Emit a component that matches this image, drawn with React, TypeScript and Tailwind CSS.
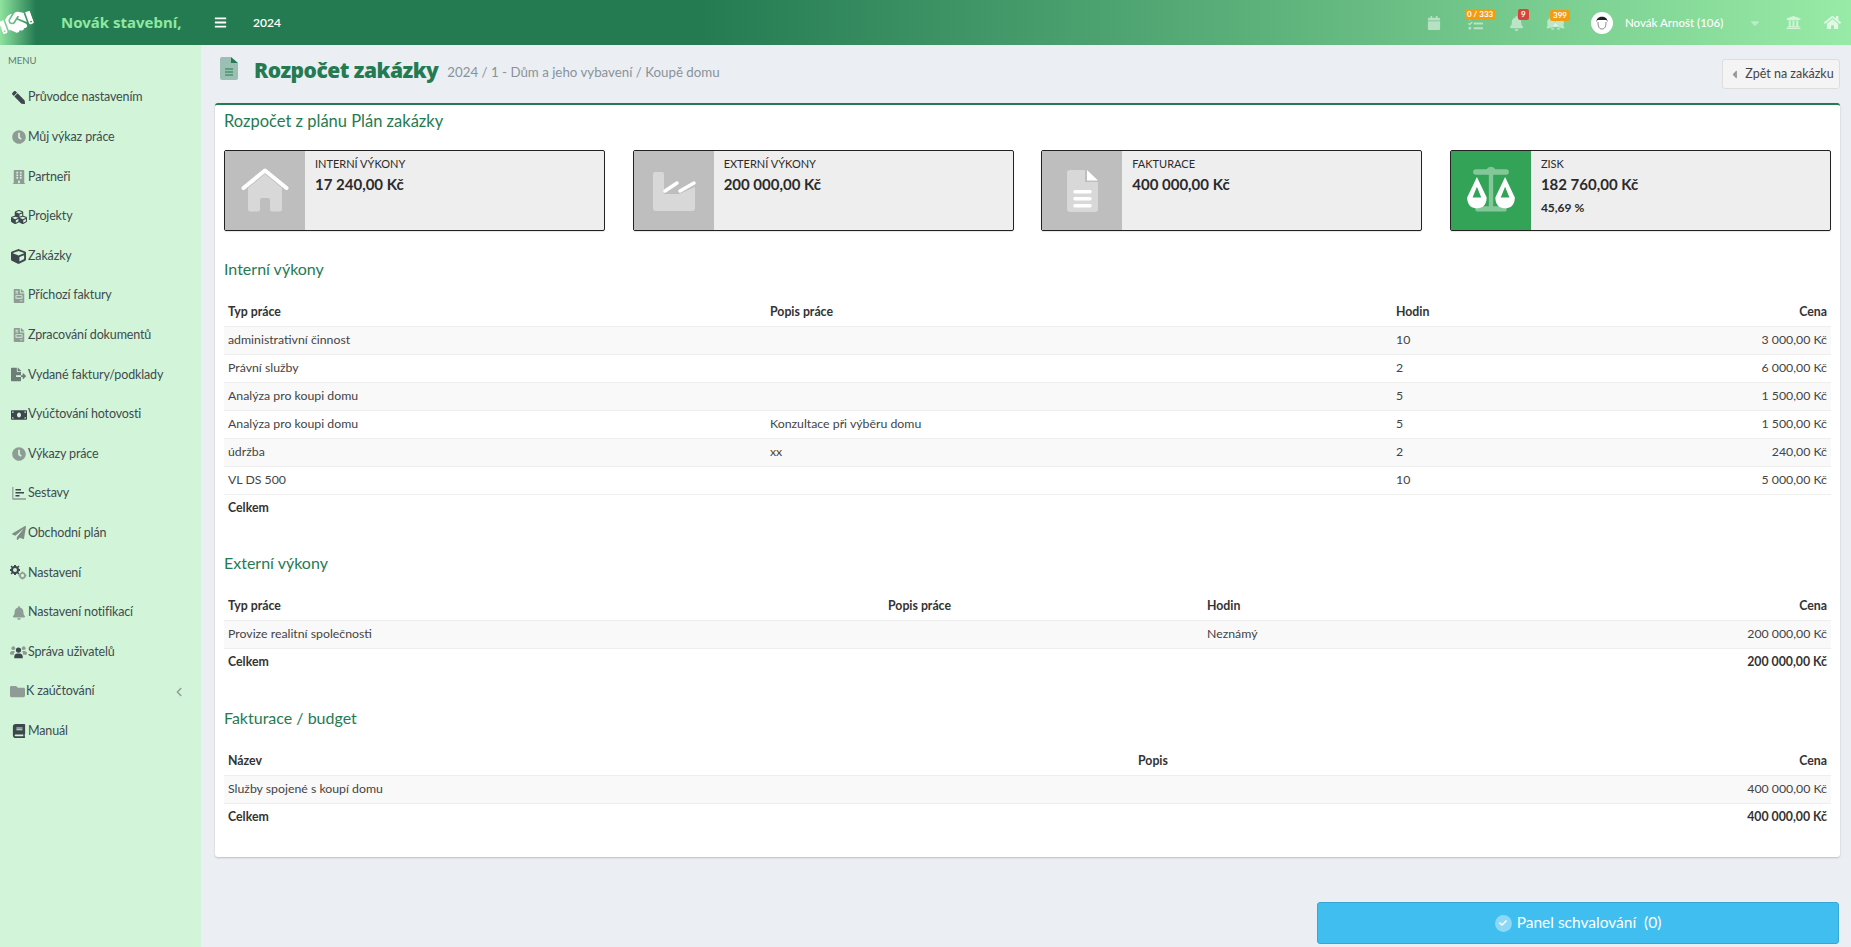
import React from "react";
import {
  FaPen, FaClock, FaBuilding, FaCubes, FaCube, FaFileInvoice, FaFileExport, FaMoneyBill,
  FaPaperPlane, FaBell, FaFolder, FaBook, FaBars, FaCaretDown, FaCaretLeft, FaUniversity, FaHome,
  FaCalendar, FaTasks, FaCheck, FaChevronLeft,
} from "react-icons/fa";
import { FaHandshake } from "react-icons/fa6";

const body = { fontFamily: 'Lato, "Noto Sans", sans-serif' };
const head = { fontFamily: '"Noto Sans", sans-serif' };

function Duo({ main, accent, className }: { main: React.ReactNode; accent: React.ReactNode; className?: string }) {
  return (
    <svg viewBox="0 0 48 48" className={className}>
      <g fill="#fff" fillOpacity="0.4">{main}</g>
      <g fill="#fff">{accent}</g>
    </svg>
  );
}

const Gears = (
  <svg viewBox="0 0 17 15" className="w-[17px] h-[15px]">
    <g fill="#3d474d"><circle cx="5" cy="5" r="3" fill="none" stroke="#3d474d" strokeWidth="2" /><path d="M4 0 H6 V2 H4 Z M4 8 H6 V10 H4 Z M0 4 H2 V6 H0 Z M8 4 H10 V6 H8 Z M1.500 0.500 L3 2 L2 3 L0.500 1.500 Z M8.500 0.500 L9.500 1.500 L8 3 L7 2 Z M1.500 9.500 L0.500 8.500 L2 7 L3 8 Z M8.500 9.500 L7 8 L8 7 L9.500 8.500 Z" /></g>
    <g fill="#8f9c96"><circle cx="12.500" cy="10.500" r="2.500" fill="none" stroke="#8f9c96" strokeWidth="1.700" /><path d="M11.800 6.500 H13.200 V8 H11.800 Z M11.800 13 H13.200 V14.500 H11.800 Z M8.500 9.800 H10 V11.200 H8.500 Z M15 9.800 H16.500 V11.200 H15 Z" /></g>
  </svg>
);

const Users = (
  <svg viewBox="0 0 18 14" className="w-[17px] h-[14px]">
    <g fill="#8f9c96"><circle cx="3.500" cy="3" r="2" /><circle cx="14.500" cy="3" r="2" /><path d="M0 9 a2.500 2.500 0 0 1 2.500 -3 H5 L4 10 H1 Z M18 9 a2.500 2.500 0 0 0 -2.500 -3 H13 L14 10 H17 Z" /></g>
    <g fill="#3d474d"><circle cx="9" cy="5" r="2.800" /><path d="M4.500 12.500 a3.500 3.500 0 0 1 3.500 -4 H10 a3.500 3.500 0 0 1 3.500 4 v1 H4.500 Z" /></g>
  </svg>
);

const Report = (
  <svg viewBox="0 0 14 13" className="w-[14px] h-[13px]">
    <path d="M0 0 H1.500 V11 H14 V13 H1.500 A1.500 1.500 0 0 1 0 11.500 Z" fill="#9fada6" />
    <path d="M3.500 2 H9 V3.500 H3.500 Z M3.500 5 H12 V6.500 H3.500 Z M3.500 8 H7.500 V9.500 H3.500 Z" fill="#3d474d" />
  </svg>
);

const menu: [string, React.ReactNode][] = [
  ["Průvodce nastavením", <FaPen className="text-[#3d474d] text-[13px] -scale-x-100" />],
  ["Můj výkaz práce", <FaClock className="text-[#8f9c96] text-[14px]" />],
  ["Partneři", <FaBuilding className="text-[#8f9c96] text-[14px]" />],
  ["Projekty", <FaCubes className="text-[#3d474d] text-[16px]" />],
  ["Zakázky", <FaCube className="text-[#3d474d] text-[15px]" />],
  ["Příchozí faktury", <FaFileInvoice className="text-[#8f9c96] text-[14px]" />],
  ["Zpracování dokumentů", <FaFileInvoice className="text-[#8f9c96] text-[14px]" />],
  ["Vydané faktury/podklady", <FaFileExport className="text-[#6f7d78] text-[15px]" />],
  ["Vyúčtování hotovosti", <FaMoneyBill className="text-[#3d474d] text-[16px]" />],
  ["Výkazy práce", <FaClock className="text-[#8f9c96] text-[14px]" />],
  ["Sestavy", Report],
  ["Obchodní plán", <FaPaperPlane className="text-[#7f8d86] text-[14px]" />],
  ["Nastavení", Gears],
  ["Nastavení notifikací", <FaBell className="text-[#8f9c96] text-[14px]" />],
  ["Správa uživatelů", Users],
  ["K zaúčtování", <FaFolder className="text-[#8f9c96] text-[15px]" />],
  ["Manuál", <FaBook className="text-[#3d474d] text-[14px]" />],
];

function Header() {
  return (
    <header
      className="h-[45px] shrink-0 flex items-center text-white bg-[linear-gradient(90deg,#8fe39f_0px,#247b52_36px,#247b52_700px,#98eba6_1851px)]"
      style={body}
    >
      <div className="w-[35px] flex justify-center"><FaHandshake className="text-[33px] text-white -rotate-[20deg] -ml-[2px]" /></div>
      <div className="ml-[26px] w-[153px] text-[15px] font-bold text-[#8fe8a0] whitespace-nowrap" style={head}>Novák stavební,</div>
      <FaBars className="text-[13px]" />
      <div className="ml-[26px] text-[12px] font-semibold">2024</div>
      <div className="flex-1" />
      <FaCalendar className="text-[14px] text-white/50 mt-[1px]" />
      <div className="relative ml-[27px] mt-[2px]">
        <FaTasks className="text-[15px] text-white/50" />
        <span className="absolute -top-[7px] -left-[3px] bg-[#f39c12] rounded-[2px] text-[8px] font-bold leading-[11px] px-[2px] whitespace-nowrap">0 / 333</span>
      </div>
      <div className="relative ml-[26px] mt-[2px]">
        <FaBell className="text-[15px] text-white/50" />
        <span className="absolute -top-[7px] left-[9px] bg-[#d9443a] rounded-[2px] text-[8px] font-bold leading-[11px] px-[3px]">9</span>
      </div>
      <div className="relative ml-[21px] mt-[2px] flex">
        <FaBell className="text-[13px] text-white/50 -rotate-12" />
        <FaBell className="text-[13px] text-white/50 rotate-12 -ml-[5px]" />
        <span className="absolute -top-[7px] left-[5px] bg-[#f39c12] rounded-[2px] text-[8px] font-bold leading-[11px] px-[3px]">399</span>
      </div>
      <svg viewBox="0 0 22 22" className="w-[22px] h-[22px] ml-[25px]">
        <circle cx="11" cy="11" r="11" fill="#fff" />
        <path d="M5.500 10 C5 3 17 3 16.500 10 L15.500 8 C12 8 9 8 6.500 8 Z" fill="#222" />
        <path d="M7 10 C7 16 9 17 11 17 C13 17 15 16 15 10" fill="none" stroke="#555" strokeWidth="0.7" />
      </svg>
      <div className="ml-[12px] w-[102px] text-[11.5px] whitespace-nowrap" style={{ fontWeight: 500 }}>Novák Arnošt (106)</div>
      <FaCaretDown className="ml-[21px] text-[14px] text-white/40" />
      <FaUniversity className="ml-[24px] text-[15px] text-white/60" />
      <FaHome className="ml-[23px] mr-[10px] text-[17px] text-white/70" />
    </header>
  );
}

function Sidebar() {
  return (
    <aside className="w-[201px] shrink-0 bg-[#d2f5d9] text-[#3f4b4f]" style={body}>
      <div className="pl-[8px] pt-[10px] text-[9.500px] leading-[12px] text-[#5b7a6c]">MENU</div>
      <nav className="mt-[11px]">
        {menu.map(([label, icon]) => (
          <div key={label} className="h-[39.6px] flex items-center">
            <div className={`pl-[10px] flex justify-center shrink-0 ${label === "K zaúčtování" ? "w-[25px]" : "w-[27px]"}`}>{icon}</div>
            <span className="text-[12.5px] tracking-[-0.15px] whitespace-nowrap pl-[1px]">{label}</span>
            {label === "K zaúčtování" && <FaChevronLeft className="ml-auto mr-[17px] text-[10px] text-[#8fa596]" />}
          </div>
        ))}
      </nav>
    </aside>
  );
}

function Stat({ title, value, extra, icon, green }: { title: string; value: string; extra?: string; icon: React.ReactNode; green?: boolean }) {
  return (
    <div className="h-[81px] flex bg-[#eeeeee] border border-[#222] rounded-[2px] shadow-[0_1px_1px_rgba(0,0,0,0.1)]">
      <div className={`w-[80px] flex items-center justify-center shrink-0 ${green ? "bg-[#33a457]" : "bg-[#bebebe]"}`}>{icon}</div>
      <div className="pl-[10px] pt-[5px] text-[#2b2b2b]">
        <div className="text-[11px] leading-[16px]">{title}</div>
        <div className="text-[15px] font-bold leading-[20px] mt-[2px]">{value}</div>
        {extra && <div className="text-[12px] font-bold leading-[16px] mt-[6px]">{extra}</div>}
      </div>
    </div>
  );
}

type Row = string[];

function DataTable({ widths, head, rows, total }: { widths: number[]; head: string[]; rows: Row[]; total: Row }) {
  return (
    <table className="w-full table-fixed border-collapse text-[12.3px] text-[#444]">
      <colgroup>
        {widths.map((w, i) => <col key={i} style={{ width: w }} />)}
      </colgroup>
      <thead>
        <tr className="h-[27px] border-b border-[#eeeeee] text-[#333]">
          {head.map((h, i) => (
            <th key={h} className={`px-[4px] font-bold ${i === head.length - 1 ? "text-right" : "text-left"}`}>{h}</th>
          ))}
        </tr>
      </thead>
      <tbody>
        {rows.map((r, ri) => (
          <tr key={ri} className={`h-[28px] border-b border-[#eeeeee] ${ri % 2 === 0 ? "bg-[#f9f9f9]" : "bg-white"}`}>
            {r.map((c, i) => (
              <td key={i} className={`px-[4px] ${i === r.length - 1 ? "text-right" : "text-left"}`}>{c}</td>
            ))}
          </tr>
        ))}
        <tr className="h-[28px] font-bold text-[#333]">
          {total.map((c, i) => (
            <td key={i} className={`px-[4px] ${i === total.length - 1 ? "text-right" : "text-left"}`}>{c}</td>
          ))}
        </tr>
      </tbody>
    </table>
  );
}

function Section({ children }: { children: React.ReactNode }) {
  return <h3 className="text-[16px] leading-[20px] text-[#247b52]">{children}</h3>;
}

export default function App() {
  return (
    <div className="w-[1851px] h-[947px] overflow-hidden flex flex-col bg-[#ebeef3]" style={body}>
      <Header />
      <div className="flex flex-1 min-h-0">
        <Sidebar />
        <main className="flex-1 min-w-0 pl-[14px] pr-[11px]">
          <div className="h-[58px] flex items-start">
            <svg viewBox="0 0 18 23" className="w-[18px] h-[23px] mt-[12px] ml-[5px]">
              <path d="M2 0 H11 V6 H18 V21 A2 2 0 0 1 16 23 H2 A2 2 0 0 1 0 21 V2 A2 2 0 0 1 2 0 Z" fill="#247b52" fillOpacity="0.4" />
              <path d="M11 0 L18 6 H11 Z" fill="#247b52" />
              <path d="M5 12 H13 M5 15 H13 M5 18 H13" stroke="#247b52" strokeWidth="1.2" />
            </svg>
            <h1 className="ml-[16px] mt-[10px] text-[21px] leading-[30px] font-black tracking-[-0.5px] text-[#247b52] whitespace-nowrap" style={head}>Rozpočet zakázky</h1>
            <span className="ml-[9px] mt-[15px] text-[13.3px] leading-[24px] text-[#8a9299] whitespace-nowrap">2024 / 1 - Dům a jeho vybavení / Koupě domu</span>
            <button className="ml-auto mt-[14px] h-[30px] w-[118px] flex items-center justify-center gap-[4px] rounded-[3px] border border-[#dddddd] bg-[#f4f4f4] text-[12.5px] text-[#444]">
              <FaCaretLeft className="text-[13px] text-[#999]" />Zpět na zakázku
            </button>
          </div>
          <section className="h-[754px] bg-white rounded-[3px] border-t-2 border-[#247b52] shadow-[0_1px_2px_rgba(0,0,0,0.2)] px-[9px]">
            <h2 className="pt-[4px] text-[16.5px] leading-[24px] text-[#247b52]">Rozpočet z plánu Plán zakázky</h2>
            <div className="mt-[17px] grid grid-cols-4 gap-[27.500px]">
              <Stat title="INTERNÍ VÝKONY" value="17 240,00 Kč" icon={
                <Duo className="w-[48px] h-[48px]"
                  main={<path d="M7 21 L24 7 L41 21 V42 a2.500 2.500 0 0 1 -2.500 2.500 H31 a2 2 0 0 1 -2 -2 V33 a2 2 0 0 0 -2 -2 H21 a2 2 0 0 0 -2 2 V42.500 a2 2 0 0 1 -2 2 H9.500 a2.500 2.500 0 0 1 -2.500 -2.500 Z" />}
                  accent={<path d="M2.500 21 L24 3.500 L45.500 21" fill="none" stroke="#fff" strokeWidth="4" strokeLinecap="round" strokeLinejoin="round" />} />} />
              <Stat title="EXTERNÍ VÝKONY" value="200 000,00 Kč" icon={
                <Duo className="w-[48px] h-[48px]"
                  main={<path d="M5 5 H12 a2 2 0 0 1 2 2 V27 L29 27 L45 20 V41 a3 3 0 0 1 -3 3 H6 a3 3 0 0 1 -3 -3 V7 a2 2 0 0 1 2 -2 Z" />}
                  accent={<path d="M15 24 L27 16 M30 24 L44 16" fill="none" stroke="#fff" strokeWidth="3.500" strokeLinecap="round" />} />} />
              <Stat title="FAKTURACE" value="400 000,00 Kč" icon={
                <Duo className="w-[48px] h-[48px]"
                  main={<path d="M12 3 H27 V15 H40 V42 a3 3 0 0 1 -3 3 H12 a3 3 0 0 1 -3 -3 V6 a3 3 0 0 1 3 -3 Z" />}
                  accent={<path d="M29 3 L40 13.500 H29 Z M17 23 H32 a1.500 1.500 0 0 1 0 3.500 H17 a1.500 1.500 0 0 1 0 -3.500 Z M17 30 H32 a1.500 1.500 0 0 1 0 3.500 H17 a1.500 1.500 0 0 1 0 -3.500 Z M17 37 H32 a1.500 1.500 0 0 1 0 3.500 H17 a1.500 1.500 0 0 1 0 -3.500 Z" />} />} />
              <Stat green title="ZISK" value="182 760,00 Kč" extra="45,69 %" icon={
                <Duo className="w-[52px] h-[52px]"
                  main={<path d="M10 4 H20 A4.500 4.500 0 0 1 28 4 H38 a2 2 0 0 1 0 5 H26 V38 H36 a2.500 2.500 0 0 1 0 5 H12 a2.500 2.500 0 0 1 0 -5 H22 V9 H10 a2 2 0 0 1 0 -5 Z" />}
                  accent={<path fillRule="evenodd" d="M11 11 L2 30 C2 38 7 40 11 40 C15 40 20 38 20 30 Z M11 20 L7 30 H15 Z M37 11 L28 30 C28 38 33 40 37 40 C41 40 46 38 46 30 Z M37 20 L33 30 H41 Z" />} />} />
            </div>

            <div className="mt-[28px]"><Section>Interní výkony</Section></div>
            <div className="mt-[20px]">
              <DataTable
                widths={[542, 626, 220, 219]}
                head={["Typ práce", "Popis práce", "Hodin", "Cena"]}
                rows={[
                  ["administrativní činnost", "", "10", "3 000,00 Kč"],
                  ["Právní služby", "", "2", "6 000,00 Kč"],
                  ["Analýza pro koupi domu", "", "5", "1 500,00 Kč"],
                  ["Analýza pro koupi domu", "Konzultace při výběru domu", "5", "1 500,00 Kč"],
                  ["údržba", "xx", "2", "240,00 Kč"],
                  ["VL DS 500", "", "10", "5 000,00 Kč"],
                ]}
                total={["Celkem", "", "", ""]}
              />
            </div>

            <div className="mt-[31px]"><Section>Externí výkony</Section></div>
            <div className="mt-[20px]">
              <DataTable
                widths={[660, 319, 314, 314]}
                head={["Typ práce", "Popis práce", "Hodin", "Cena"]}
                rows={[["Provize realitní společnosti", "", "Neznámý", "200 000,00 Kč"]]}
                total={["Celkem", "", "", "200 000,00 Kč"]}
              />
            </div>

            <div className="mt-[32px]"><Section>Fakturace / budget</Section></div>
            <div className="mt-[20px]">
              <DataTable
                widths={[910, 348, 349]}
                head={["Název", "Popis", "Cena"]}
                rows={[["Služby spojené s koupí domu", "", "400 000,00 Kč"]]}
                total={["Celkem", "", "400 000,00 Kč"]}
              />
            </div>
          </section>
          <div className="mt-[45px] flex justify-end">
            <button className="w-[522px] h-[42px] mr-[1px] rounded-[3px] border border-[#35a8d8] bg-[#41bef0] flex items-center justify-center gap-[5px] text-white text-[15.5px]">
              <span className="w-[17px] h-[17px] rounded-full bg-white/40 flex items-center justify-center"><FaCheck className="text-[8px] text-white" /></span>
              Panel schvalování&nbsp; (0)
            </button>
          </div>
        </main>
      </div>
    </div>
  );
}
